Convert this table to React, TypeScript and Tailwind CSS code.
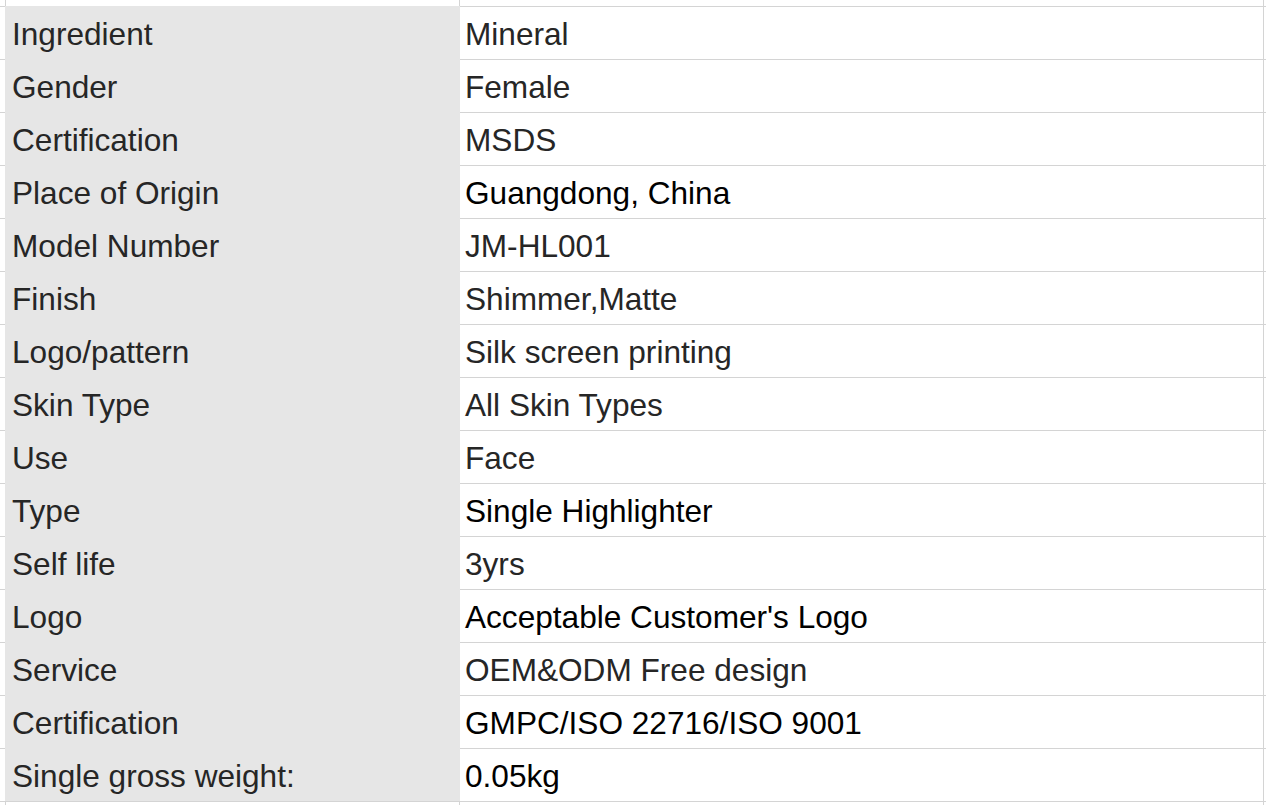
import React from 'react';

type Row = { label: string; value: string; dark?: boolean };

const rows: Row[] = [
  { label: 'Ingredient', value: 'Mineral' },
  { label: 'Gender', value: 'Female' },
  { label: 'Certification', value: 'MSDS' },
  { label: 'Place of Origin', value: 'Guangdong, China', dark: true },
  { label: 'Model Number', value: 'JM-HL001' },
  { label: 'Finish', value: 'Shimmer,Matte' },
  { label: 'Logo/pattern', value: 'Silk screen printing' },
  { label: 'Skin Type', value: 'All Skin Types' },
  { label: 'Use', value: 'Face' },
  { label: 'Type', value: 'Single Highlighter', dark: true },
  { label: 'Self life', value: '3yrs' },
  { label: 'Logo', value: "Acceptable Customer's Logo", dark: true },
  { label: 'Service', value: 'OEM&ODM Free design' },
  { label: 'Certification', value: 'GMPC/ISO 22716/ISO 9001', dark: true },
  { label: 'Single gross weight:', value: '0.05kg', dark: true },
];

function Strip({ h }: { h: string }) {
  return (
    <div className={`flex ${h}`}>
      <div className="w-[6px] shrink-0 border-r border-[#d4d4d4]" />
      <div className="w-[454px] shrink-0 border-r border-[#d4d4d4]" />
      <div className="w-[804px] shrink-0 border-r border-[#d4d4d4]" />
      <div className="flex-1" />
    </div>
  );
}

export default function App() {
  return (
    <div
      className="w-[1266px] h-[805px] overflow-hidden bg-white text-[31.6px]"
      style={{ fontFamily: '"Liberation Sans", Arial, sans-serif' }}
    >
      <Strip h="h-[6px]" />
      {rows.map((r, i) => (
        <div key={i} className="flex h-[53px] border-t border-[#d4d4d4]">
          <div className="w-[5px] shrink-0" />
          <div className="w-[455px] shrink-0 -mt-px h-[53px] bg-[#e6e6e6] flex items-center pl-[7px] pt-[5px] text-[#262626] whitespace-nowrap">
            {r.label}
          </div>
          <div
            className={`w-[804px] shrink-0 border-r border-[#d4d4d4] flex items-center pl-[5px] pt-[4px] whitespace-nowrap ${
              r.dark ? 'text-black' : 'text-[#262626]'
            }`}
          >
            {r.value}
          </div>
          <div className="flex-1" />
        </div>
      ))}
      <div className="border-t border-[#d4d4d4]">
        <Strip h="h-[3px]" />
      </div>
    </div>
  );
}
